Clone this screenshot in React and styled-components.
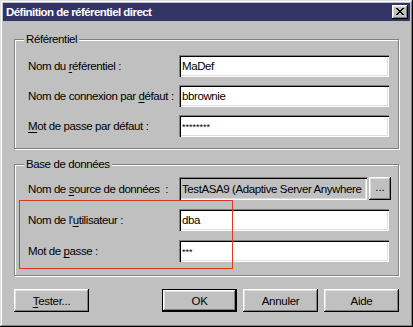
import styled, { createGlobalStyle } from "styled-components";

const FONT = `"Liberation Sans", Arial, sans-serif`;

const GlobalStyle = createGlobalStyle`
    html, body {
        margin: 0;
        padding: 0;
        background: #c0c0c0;
    }
    body {
        font-family: ${FONT};
        font-size: 11.5px;
        letter-spacing: -0.4px;
        color: #000;
    }
`;

const bevel = `
    box-shadow: inset -1px -1px #000, inset 1px 1px #fff,
        inset -2px -2px #808080, inset 2px 2px #dfdfdf;
`;

const sunken = `
    box-shadow: inset 1px 1px #808080, inset 2px 2px #000,
        inset -1px -1px #fff, inset -2px -2px #dfdfdf;
`;

export default function App() {
    return (
        <>
            <GlobalStyle />
            <Window>
                <TitleBar>
                    <span>Définition de référentiel direct</span>
                    <CloseButton aria-label="Fermer">
                        <svg width="8" height="7" viewBox="0 0 8 7">
                            <path d="M0 0h2v1h1v1h2V1h1V0h2v1H7v1H6v1H5v1h1v1h1v1h1v1H6V6H5V5H3v1H2v1H0V6h1V5h1V4h1V3H2V2H1V1H0z" fill="#000" />
                        </svg>
                    </CloseButton>
                </TitleBar>
                <Content>
                    <GroupBox $pad="15px 9px 11px 13px" $gap={8}>
                        <Legend>Référentiel</Legend>
                        <Row>
                            <Label>Nom du <u>r</u>éférentiel :</Label>
                            <Field readOnly value="MaDef" />
                        </Row>
                        <Row>
                            <Label>Nom de connexion par <u>d</u>éfaut :</Label>
                            <Field readOnly value="bbrownie" />
                        </Row>
                        <Row>
                            <Label><u>M</u>ot de passe par défaut :</Label>
                            <Field readOnly $secret value="********" />
                        </Row>
                    </GroupBox>
                    <GroupBox $pad="12px 9px 13px 13px" $gap={9} $top={15}>
                        <Legend>Base de données</Legend>
                        <Row>
                            <Label>Nom de <u>s</u>ource de données&nbsp; :</Label>
                            <SourceBox>
                                <Field readOnly $disabled value="TestASA9 (Adaptive Server Anywhere 9.0)" />
                                <SmallButton>...</SmallButton>
                            </SourceBox>
                        </Row>
                        <Row>
                            <Label>Nom de l'<u>u</u>tilisateur :</Label>
                            <Field readOnly value="dba" />
                        </Row>
                        <Row>
                            <Label>Mot de <u>p</u>asse :</Label>
                            <Field readOnly $secret value="***" />
                        </Row>
                        <Highlight />
                    </GroupBox>
                    <ButtonBar>
                        <Button><u>T</u>ester...</Button>
                        <ButtonGroup>
                            <Button $default>OK</Button>
                            <Button>Annuler</Button>
                            <Button>Aide</Button>
                        </ButtonGroup>
                    </ButtonBar>
                </Content>
            </Window>
        </>
    );
}

const Window = styled.div`
    width: 413px;
    height: 327px;
    box-sizing: border-box;
    padding: 3px;
    background: #c0c0c0;
    box-shadow: inset -1px -1px #000, inset 1px 1px #dfdfdf,
        inset -2px -2px #808080, inset 2px 2px #fff;
    display: flex;
    flex-direction: column;
`;

const TitleBar = styled.div`
    height: 18px;
    background: #333366;
    color: #fff;
    font-weight: bold;
    font-size: 11.5px;
    letter-spacing: -0.55px;
    display: flex;
    align-items: center;
    justify-content: space-between;
    padding: 0 2px 0 3px;
`;

const CloseButton = styled.div`
    width: 16px;
    height: 14px;
    box-sizing: border-box;
    background: #c0c0c0;
    ${bevel}
    display: flex;
    align-items: center;
    justify-content: center;
    padding-bottom: 1px;
`;

const Content = styled.div`
    padding: 18px 11px 0 11px;
    display: flex;
    flex-direction: column;
`;

const GroupBox = styled.div`
    position: relative;
    margin-top: ${(p) => p.$top || 0}px;
    border: 1px solid #808080;
    box-shadow: inset 1px 1px #fff, 1px 1px #fff;
    padding: ${(p) => p.$pad};
    display: flex;
    flex-direction: column;
    gap: ${(p) => p.$gap}px;
`;

const Legend = styled.span`
    position: absolute;
    top: -8px;
    left: 9px;
    padding: 0 2px;
    background: #c0c0c0;
    line-height: 14px;
`;

const Row = styled.div`
    display: grid;
    grid-template-columns: 151px auto;
    align-items: center;
`;

const Label = styled.span`
    white-space: nowrap;
    u {
        text-decoration-thickness: 1px;
        text-underline-offset: 2px;
    }
`;

const Field = styled.input`
    width: 210px;
    height: 22px;
    box-sizing: border-box;
    border: none;
    outline: none;
    margin: 0;
    padding: ${(p) => (p.$secret ? "1px 3px 0" : "0 3px")};
    background: ${(p) => (p.$disabled ? "#c0c0c0" : "#fff")};
    font-family: ${FONT};
    font-size: ${(p) => (p.$secret ? "9px" : "11.5px")};
    letter-spacing: ${(p) => (p.$secret ? "0" : "-0.4px")};
    line-height: ${(p) => (p.$secret ? "10px" : "normal")};
    vertical-align: ${(p) => (p.$secret ? "top" : "middle")};
    color: #000;
    ${sunken}
`;

const SourceBox = styled.div`
    display: flex;
    align-items: center;
    gap: 2px;
    input {
        width: 188px;
        height: 23px;
    }
`;

const SmallButton = styled.button`
    width: 22px;
    height: 23px;
    padding: 0 0 3px;
    margin: 0;
    border: none;
    background: #c0c0c0;
    font-family: ${FONT};
    font-size: 11.5px;
    ${bevel}
`;

const Highlight = styled.div`
    position: absolute;
    left: 4px;
    top: 35px;
    width: 214px;
    height: 69px;
    box-sizing: border-box;
    border: 1px solid #dc3a1e;
    pointer-events: none;
`;

const ButtonBar = styled.div`
    margin-top: 13px;
    display: flex;
    justify-content: space-between;
`;

const ButtonGroup = styled.div`
    display: flex;
    gap: 6px;
`;

const Button = styled.button`
    width: 75px;
    height: 23px;
    margin: 0;
    padding: 0;
    border: ${(p) => (p.$default ? "1px solid #000" : "none")};
    background: #c0c0c0;
    font-family: ${FONT};
    font-size: 11.5px;
    letter-spacing: -0.3px;
    color: #000;
    ${bevel}
    u {
        text-underline-offset: 2px;
    }
`;
